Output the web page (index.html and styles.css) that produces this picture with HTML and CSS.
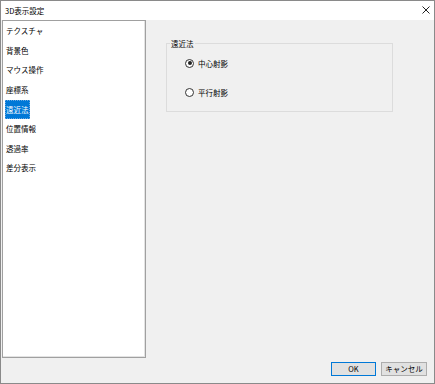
FILE: index.html
```html
<!DOCTYPE html>
<html lang="ja">
<head>
    <meta charset="UTF-8">
    <meta name="viewport" content="width=device-width, initial-scale=1.0">
    <title>3D表示設定</title>
    <link rel="stylesheet" href="styles.css">
</head>
<body>

    <div class="window">
        <!-- タイトルバー -->
        <div class="titlebar">
            <span class="title">3D表示設定</span>
            <svg class="close" width="8" height="8" viewBox="0 0 8 8">
                <path d="M0.5 0.5 L7.5 7.5 M7.5 0.5 L0.5 7.5" stroke="#222" stroke-width="1" fill="none"/>
            </svg>
        </div>

        <div class="content">
            <div class="main">
                <!-- 左側のリスト -->
                <ul class="list">
                    <li><span>テクスチャ</span></li>
                    <li><span>背景色</span></li>
                    <li><span>マウス操作</span></li>
                    <li><span>座標系</span></li>
                    <li class="selected"><span>遠近法</span></li>
                    <li><span>位置情報</span></li>
                    <li><span>透過率</span></li>
                    <li><span>差分表示</span></li>
                </ul>

                <!-- 右側のパネル -->
                <div class="panel">
                    <div class="group">
                        <span class="group-label">遠近法</span>
                        <div class="radio"><span class="circle checked"></span>中心射影</div>
                        <div class="radio"><span class="circle"></span>平行射影</div>
                    </div>
                </div>
            </div>

            <div class="footer">
                <button class="btn default">OK</button>
                <button class="btn">キャンセル</button>
            </div>
        </div>
    </div>

</body>
</html>
```

FILE: styles.css
```css
* {
    margin: 0;
    padding: 0;
    box-sizing: border-box;
}
html, body {
    width: 100%;
    height: 100%;
    font-family: 'Noto Sans CJK JP', 'Noto Sans', sans-serif;
    font-size: 7.5px;
    color: #000;
    background: #fff;
    overflow: hidden;
}
.window {
    width: 435px;
    height: 384px;
    border: 1px solid #8a8a8a;
    background: #f0f0f0;
    display: flex;
    flex-direction: column;
}
/* タイトルバー */
.titlebar {
    height: 19px;
    background: #fff;
    display: flex;
    align-items: center;
    justify-content: space-between;
    padding: 0 4px 1px 4px;
}
.title {
    line-height: 11px;
}
.close {
    display: block;
}
.content {
    flex: 1;
    display: flex;
    flex-direction: column;
    padding: 0 7px 7px 1px;
}
.main {
    display: flex;
    height: 338px;
}
/* リスト */
.list {
    list-style: none;
    width: 144px;
    height: 338px;
    background: #fff;
    border: 1px solid #a0a0a0;
    box-shadow: inset -1px -1px 0 #e3e3e3;
}
.list li {
    height: 19.6px;
    display: flex;
    align-items: center;
    padding-left: 2px;
}
.list li span {
    padding: 0 1px;
    line-height: 19px;
}
.list li.selected span {
    background: #0078d7;
    color: #fff;
    outline: 1px dotted #6aa8e0;
    outline-offset: -1px;
}
/* グループ */
.panel {
    margin-left: 20px;
}
.group {
    position: relative;
    margin-top: 23px;
    width: 227px;
    height: 69px;
    border: 1px solid #dcdcdc;
    padding: 13px 0 0 18px;
    display: flex;
    flex-direction: column;
    gap: 17px;
}
.group-label {
    position: absolute;
    top: -6px;
    left: 3px;
    padding: 0 1px;
    background: #f0f0f0;
    line-height: 11px;
}
.radio {
    height: 12px;
    display: flex;
    align-items: center;
    gap: 4px;
}
.circle {
    width: 9px;
    height: 9px;
    border: 1px solid #333;
    border-radius: 50%;
    background: #fff;
    display: flex;
    align-items: center;
    justify-content: center;
}
.circle.checked::after {
    content: "";
    width: 4px;
    height: 4px;
    border-radius: 50%;
    background: #222;
}
/* ボタン */
.footer {
    margin-top: 4px;
    display: flex;
    justify-content: flex-end;
    gap: 5px;
}
.btn {
    height: 14px;
    width: 46px;
    font-family: inherit;
    font-size: 7.5px;
    color: #000;
    background: #e1e1e1;
    border: 1px solid #adadad;
    line-height: 12px;
}
.btn.default {
    width: 45px;
    border-color: #0078d7;
}
```
